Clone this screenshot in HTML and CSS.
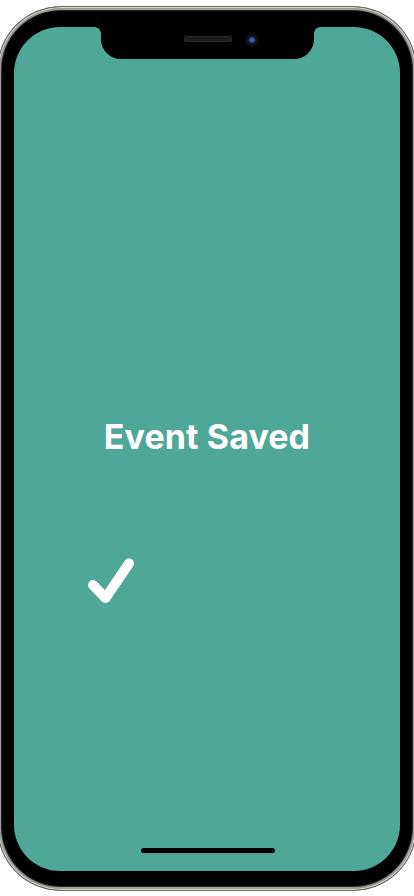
FILE: index.html
```html
<!DOCTYPE html>
<html lang="en">
<head>
<meta charset="utf-8">
<title>Event Saved</title>
<link rel="stylesheet" href="styles.css">
</head>
<body>
<div class="phone">
  <div class="screen">
    <div class="notch">
      <span class="speaker"></span>
      <span class="camera"></span>
    </div>
    <h1 class="title">Event Saved</h1>
    <svg class="check" width="48" height="48" viewBox="0 0 48 48" aria-hidden="true">
      <path d="M6 29 L18.5 42 L42 7.5" fill="none" stroke="#fff" stroke-width="10" stroke-linecap="round" stroke-linejoin="round"/>
    </svg>
    <div class="home"></div>
  </div>
</div>
</body>
</html>
```
FILE: styles.css
```css
html, body {
  margin: 0;
  padding: 0;
  background: #ffffff;
  overflow: hidden;
}
body {
  width: 414px;
  height: 896px;
  font-family: Inter, "Noto Sans", sans-serif;
}
.phone {
  box-sizing: border-box;
  width: 420px;
  height: 885px;
  margin: 6px 0 0 -3px;
  padding: 20px 16px 19px 16px;
  background: #000;
  border-radius: 64px;
  border: 1px solid #6d6d68;
  box-shadow: inset 0 0 0 1px #d9d9d4, inset 0 0 0 3px #9c9c96, inset 0 0 0 4px #2a2a28;
}
.screen {
  position: relative;
  box-sizing: border-box;
  height: 844px;
  background: #4fa797;
  border-radius: 46px;
  display: flex;
  flex-direction: column;
  align-items: center;
  padding-top: 390px;
}
.notch {
  position: absolute;
  top: 0;
  left: 87px;
  width: 213px;
  height: 32px;
  background: #000;
  border-radius: 0 0 20px 20px;
}
.notch::before,
.notch::after {
  content: "";
  position: absolute;
  top: 0;
  width: 6px;
  height: 6px;
}
.notch::before {
  left: -6px;
  background: radial-gradient(circle at 0 100%, transparent 5.5px, #000 6px);
}
.notch::after {
  right: -6px;
  background: radial-gradient(circle at 100% 100%, transparent 5.5px, #000 6px);
}
.speaker {
  position: absolute;
  left: 83px;
  top: 9px;
  width: 48px;
  height: 6px;
  border-radius: 3px;
  background: #1c1c1e;
  box-shadow: inset 0 0 0 1px #2a2a2c;
}
.camera {
  position: absolute;
  left: 144px;
  top: 6px;
  width: 14px;
  height: 14px;
  border-radius: 50%;
  background: radial-gradient(circle, #3a5fa8 0 2px, #17233c 3px, #0d0d10 5px);
}
.title {
  margin: 0;
  font-size: 34px;
  line-height: 40px;
  font-weight: 700;
  color: #ffffff;
  letter-spacing: 0.1px;
}
.check {
  display: block;
  align-self: flex-start;
  margin: 99px 0 0 73px;
}
.home {
  position: absolute;
  left: 127px;
  bottom: 18px;
  width: 134px;
  height: 5px;
  border-radius: 3px;
  background: #000;
}
```
